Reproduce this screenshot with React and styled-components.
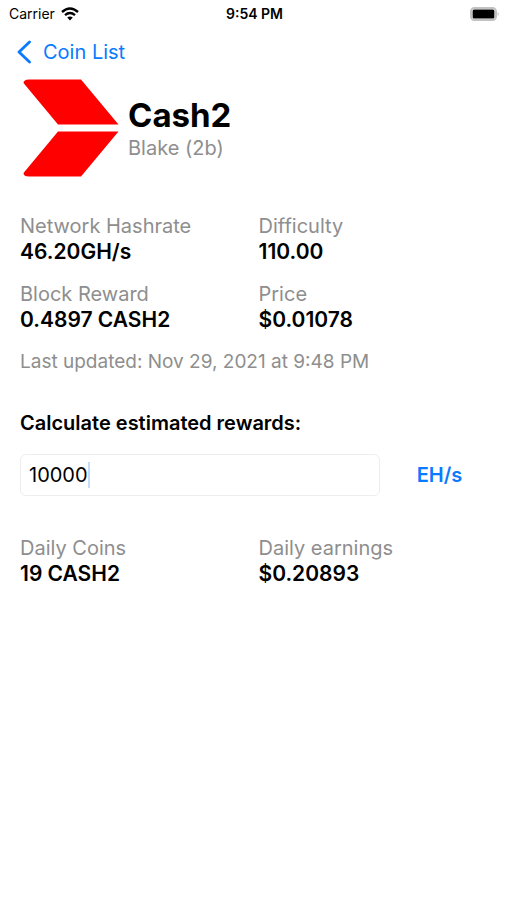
import React, { useLayoutEffect, useRef, useState } from 'react'
import styled, { createGlobalStyle } from 'styled-components'

const GlobalStyle = createGlobalStyle`
  * {
    box-sizing: border-box;
  }
  body {
    margin: 0;
    background: #fff;
    color: #000;
    font-family: Inter, "Liberation Sans", sans-serif;
  }
`

const StatusBar = styled.header`
  display: grid;
  grid-template-columns: 1fr auto 1fr;
  align-items: center;
  height: 27px;
  padding: 0 7px 0 9px;
  font-size: 14px;
`

const Carrier = styled.div`
  display: flex;
  align-items: center;
  gap: 6px;
`

const Clock = styled.div`
  font-weight: 600;
`

const Battery = styled.svg`
  justify-self: end;
`

const NavBar = styled.nav`
  display: flex;
  align-items: center;
  height: 50px;
  padding: 0 16px;
`

const BackLink = styled.a`
  display: flex;
  align-items: center;
  gap: 12px;
  color: #0a7aff;
  font-size: 20px;
  text-decoration: none;
`

const Content = styled.main`
  padding: 0 20px;
`

const CoinHeader = styled.section`
  display: flex;
  align-items: center;
  gap: 8px;
`

const CoinName = styled.h1`
  margin: 0;
  font-size: 33px;
  line-height: 40px;
  font-weight: 700;
`

const Algorithm = styled.div`
  color: #8e8e8e;
  font-size: 20px;
  line-height: 26px;
`

const StatGrid = styled.dl`
  display: grid;
  grid-template-columns: 1fr 1fr;
  gap: 18px 10px;
  margin: ${(props) => props.$top}px 0 0;
`

const StatLabel = styled.dt`
  color: #8e8e8e;
  font-size: 20px;
  line-height: 25px;
`

const StatValue = styled.dd`
  margin: 0;
  font-size: 21px;
  line-height: 25px;
  font-weight: 600;
`

const Updated = styled.p`
  margin: 18px 0 0;
  color: #8e8e8e;
  font-size: 19px;
  line-height: 24px;
`

const FormLabel = styled.label`
  display: block;
  margin-top: 36px;
  font-size: 20px;
  line-height: 26px;
  font-weight: 600;
`

const InputRow = styled.div`
  display: flex;
  margin-top: 18px;
`

const InputFrame = styled.div`
  position: relative;
  flex: 1;
  min-width: 0;
`

const RateInput = styled.input`
  display: block;
  width: 100%;
  height: 42px;
  padding: 0 8px;
  border: 1px solid #ededed;
  border-radius: 6px;
  outline: none;
  caret-color: transparent;
  font-family: inherit;
  font-size: 20px;
`

const Caret = styled.span`
  position: absolute;
  top: 8px;
  width: 2px;
  height: 26px;
  background: #c4dcfb;
  pointer-events: none;
`

const UnitButton = styled.button`
  width: 107px;
  padding: 0 0 0 12px;
  border: 0;
  background: none;
  color: #0a7aff;
  font-family: inherit;
  font-size: 20px;
  font-weight: 600;
`

function Stat({ label, value }) {
  return (
    <div>
      <StatLabel>{label}</StatLabel>
      <StatValue>{value}</StatValue>
    </div>
  )
}

function App() {
  const [rate, setRate] = useState('10000')
  const [caretLeft, setCaretLeft] = useState(0)
  const inputRef = useRef(null)

  // keep the caret behind the last digit
  useLayoutEffect(() => {
    const ctx = document.createElement('canvas').getContext('2d')
    ctx.font = getComputedStyle(inputRef.current).font
    setCaretLeft(9 + Math.round(ctx.measureText(rate).width))
  }, [rate])

  return (
    <>
      <GlobalStyle />
      <StatusBar>
        <Carrier>
          Carrier
          <svg width="18" height="14" viewBox="0 0 18 14" aria-hidden="true">
            <path d="M1 5 Q9 -2 17 5 M4 8.2 Q9 4 14 8.2" fill="none" stroke="#000" strokeWidth="2.4" />
            <path d="M6.2 10.5 Q9 8.4 11.8 10.5 L9 13.4 Z" />
          </svg>
        </Carrier>
        <Clock>9:54 PM</Clock>
        <Battery width="31" height="14" viewBox="0 0 31 14" aria-hidden="true">
          <rect x="2" y="1" width="25" height="12" rx="3.5" fill="none" stroke="#c2c2c2" strokeWidth="2" />
          <rect x="3.6" y="2.6" width="21.8" height="8.8" rx="1.5" />
          <path d="M28.6 5 Q31 7 28.6 9 Z" fill="#c2c2c2" />
        </Battery>
      </StatusBar>
      <NavBar>
        <BackLink href="#coins">
          <svg width="15" height="24" viewBox="0 0 15 24" aria-hidden="true">
            <path d="M13.5 2 L3 12 L13.5 22" fill="none" stroke="#0a7aff" strokeWidth="2.8" strokeLinecap="round" strokeLinejoin="round" />
          </svg>
          Coin List
        </BackLink>
      </NavBar>
      <Content>
        <CoinHeader>
          <svg width="100" height="102" viewBox="0 0 100 102" aria-hidden="true">
            <path d="M9 2.5 H61 L98.5 47.5 H38 L3.5 6 Q3.5 2.5 9 2.5 Z M38 54.5 H98.5 L61 99.5 H9 Q3.5 99.5 3.5 96 Z" fill="#f00" />
          </svg>
          <div>
            <CoinName>Cash2</CoinName>
            <Algorithm>Blake (2b)</Algorithm>
          </div>
        </CoinHeader>
        <StatGrid $top={35}>
          <Stat label="Network Hashrate" value="46.20GH/s" />
          <Stat label="Difficulty" value="110.00" />
          <Stat label="Block Reward" value="0.4897 CASH2" />
          <Stat label="Price" value="$0.01078" />
        </StatGrid>
        <Updated>Last updated: Nov 29, 2021 at 9:48 PM</Updated>
        <FormLabel htmlFor="rate">Calculate estimated rewards:</FormLabel>
        <InputRow>
          <InputFrame>
            <RateInput
              id="rate"
              ref={inputRef}
              inputMode="decimal"
              value={rate}
              onChange={(e) => setRate(e.target.value)}
            />
            <Caret style={{ left: caretLeft }} />
          </InputFrame>
          <UnitButton type="button">EH/s</UnitButton>
        </InputRow>
        <StatGrid $top={40}>
          <Stat label="Daily Coins" value="19 CASH2" />
          <Stat label="Daily earnings" value="$0.20893" />
        </StatGrid>
      </Content>
    </>
  )
}

export default App
